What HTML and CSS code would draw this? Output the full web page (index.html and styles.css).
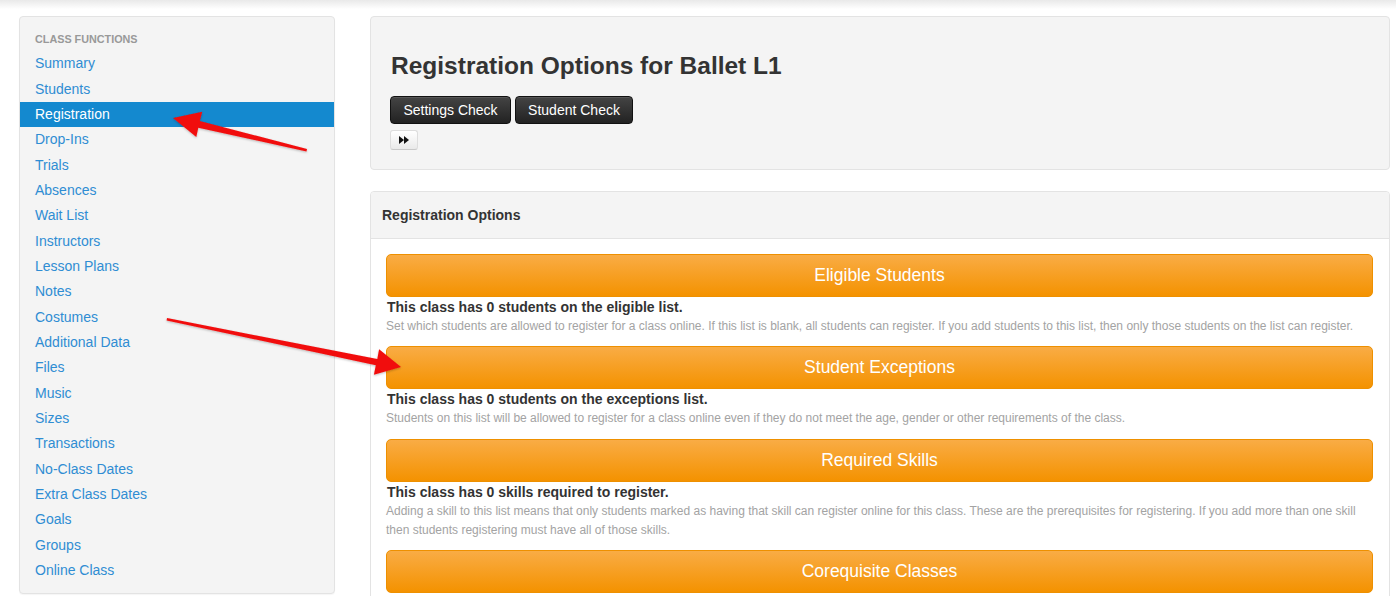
FILE: index.html
```html
<!DOCTYPE html>
<html>
<head>
<meta charset="utf-8">
<link rel="stylesheet" href="styles.css">
</head>
<body>
<div class="page">
  <aside class="sidebar">
    <div class="side-title">CLASS FUNCTIONS</div>
    <a class="side-item" href="#">Summary</a>
    <a class="side-item" href="#">Students</a>
    <a class="side-item active" href="#">Registration</a>
    <a class="side-item" href="#">Drop-Ins</a>
    <a class="side-item" href="#">Trials</a>
    <a class="side-item" href="#">Absences</a>
    <a class="side-item" href="#">Wait List</a>
    <a class="side-item" href="#">Instructors</a>
    <a class="side-item" href="#">Lesson Plans</a>
    <a class="side-item" href="#">Notes</a>
    <a class="side-item" href="#">Costumes</a>
    <a class="side-item" href="#">Additional Data</a>
    <a class="side-item" href="#">Files</a>
    <a class="side-item" href="#">Music</a>
    <a class="side-item" href="#">Sizes</a>
    <a class="side-item" href="#">Transactions</a>
    <a class="side-item" href="#">No-Class Dates</a>
    <a class="side-item" href="#">Extra Class Dates</a>
    <a class="side-item" href="#">Goals</a>
    <a class="side-item" href="#">Groups</a>
    <a class="side-item" href="#">Online Class</a>
  </aside>
  <main class="main">
    <section class="hero">
      <h1 class="hero-title">Registration Options for Ballet L1</h1>
      <div class="hero-buttons">
        <button class="btn-dark">Settings Check</button>
        <button class="btn-dark">Student Check</button>
      </div>
      <button class="btn-small" aria-label="forward">
        <svg width="10" height="8" viewBox="0 0 10 8"><path d="M0 0 L5 4 L0 8 Z M5 0 L10 4 L5 8 Z" fill="#111"/></svg>
      </button>
    </section>
    <section class="panel">
      <div class="panel-head">Registration Options</div>
      <div class="panel-body">
        <div class="option">
          <button class="btn-orange">Eligible Students</button>
          <div class="opt-status">This class has 0 students on the eligible list.</div>
          <div class="opt-desc">Set which students are allowed to register for a class online. If this list is blank, all students can register. If you add students to this list, then only those students on the list can register.</div>
        </div>
        <div class="option">
          <button class="btn-orange">Student Exceptions</button>
          <div class="opt-status">This class has 0 students on the exceptions list.</div>
          <div class="opt-desc">Students on this list will be allowed to register for a class online even if they do not meet the age, gender or other requirements of the class.</div>
        </div>
        <div class="option">
          <button class="btn-orange">Required Skills</button>
          <div class="opt-status">This class has 0 skills required to register.</div>
          <div class="opt-desc">Adding a skill to this list means that only students marked as having that skill can register online for this class. These are the prerequisites for registering. If you add more than one skill then students registering must have all of those skills.</div>
        </div>
        <div class="option">
          <button class="btn-orange">Corequisite Classes</button>
        </div>
      </div>
    </section>
  </main>
</div>
<svg class="arrows" width="1396" height="596" viewBox="0 0 1396 596">
  <defs>
    <filter id="sh" x="-10%" y="-10%" width="120%" height="130%">
      <feDropShadow dx="0" dy="1" stdDeviation="1" flood-color="#000" flood-opacity="0.25"/>
    </filter>
  </defs>
  <g fill="#f10d0d" filter="url(#sh)">
    <polygon points="173,118 202.3,111.7 199.8,121 307,149 306.5,151.5 198.3,127.8 196.3,137"/>
    <polygon points="401,367 379.1,349.3 377.3,359 167,318 166.6,320.4 375.8,365.2 373.9,374.7"/>
  </g>
</svg>
</body>
</html>
```
FILE: styles.css
```css
html, body {
  margin: 0;
  padding: 0;
  overflow: hidden;
}
body {
  font-family: "Liberation Sans", Arial, Helvetica, sans-serif;
  font-size: 14px;
  color: #333;
  background: #fff linear-gradient(#e9e9e9, #fff 9px) no-repeat;
  width: 1396px;
  height: 596px;
  position: relative;
}
.page {
  display: flex;
  align-items: flex-start;
  gap: 35px;
  padding: 16px 6px 0 19px;
}
.sidebar {
  width: 316px;
  flex: none;
  box-sizing: border-box;
  background: #f4f4f4;
  border: 1px solid #e3e3e3;
  border-radius: 4px;
  padding: 12px 0 9px;
  display: flex;
  flex-direction: column;
  box-shadow: 0 1px 1px rgba(0,0,0,0.04);
}
.side-title {
  font-size: 10.8px;
  font-weight: bold;
  color: #999;
  line-height: 20px;
  padding: 0 15px;
  margin-bottom: 2.3px;
}
.side-item {
  display: block;
  padding: 0 15px;
  line-height: 25.35px;
  color: #2f8dd3;
  text-decoration: none;
  font-size: 14px;
}
.side-item.active {
  background: #1489cf;
  color: #fff;
}
.main {
  flex: 1;
  display: flex;
  flex-direction: column;
  gap: 21px;
}
.hero {
  background: #f4f4f4;
  border: 1px solid #e3e3e3;
  border-radius: 4px;
  padding: 20px 20px 19px;
  display: flex;
  flex-direction: column;
  align-items: flex-start;
}
.hero-title {
  margin: 14.5px 0 17.5px;
  font-size: 24.5px;
  line-height: 27px;
  font-weight: bold;
  color: #333;
}
.hero-buttons {
  display: flex;
  gap: 4px;
  margin-left: -1px;
}
.btn-dark {
  font-family: inherit;
  font-size: 14px;
  color: #fff;
  height: 28px;
  padding: 0;
  white-space: nowrap;
  border: 1px solid #111;
  border-radius: 4px;
  background: linear-gradient(#444, #222);
  box-shadow: inset 0 1px 0 rgba(255,255,255,0.1);
}
.btn-dark:first-child { width: 121px; }
.btn-dark:last-child { width: 118px; }
.btn-small {
  margin-top: 6px;
  margin-left: -1px;
  width: 28px;
  height: 20px;
  padding: 0;
  border: 1px solid #ddd;
  border-bottom-color: #c8c8c8;
  border-radius: 3px;
  background: linear-gradient(#fff, #e9e9e9);
  display: flex;
  align-items: center;
  justify-content: center;
}
.panel {
  border: 1px solid #e3e3e3;
  border-radius: 4px;
  background: #fff;
  height: 420px;
}
.panel-head {
  background: #f4f4f4;
  height: 46px;
  line-height: 46px;
  padding: 0 11px;
  font-weight: bold;
  font-size: 14px;
  color: #333;
  border-bottom: 1px solid #e3e3e3;
  border-radius: 4px 4px 0 0;
}
.panel-body {
  padding: 15px 16px 0 15px;
}
.option {
  margin-bottom: 10px;
}
.btn-orange {
  display: block;
  width: 100%;
  height: 43px;
  font-family: inherit;
  font-size: 17.5px;
  color: #fff;
  border: 1px solid #ee9000;
  border-radius: 5px;
  background: linear-gradient(#f9ac45, #f49200);
  padding: 0;
}
.opt-status {
  font-weight: bold;
  font-size: 14px;
  line-height: 20px;
  color: #333;
  padding-left: 1px;
}
.opt-desc {
  font-size: 12px;
  line-height: 19.25px;
  color: #a3a3a3;
}
.arrows {
  position: absolute;
  left: 0;
  top: 0;
  pointer-events: none;
}
```
